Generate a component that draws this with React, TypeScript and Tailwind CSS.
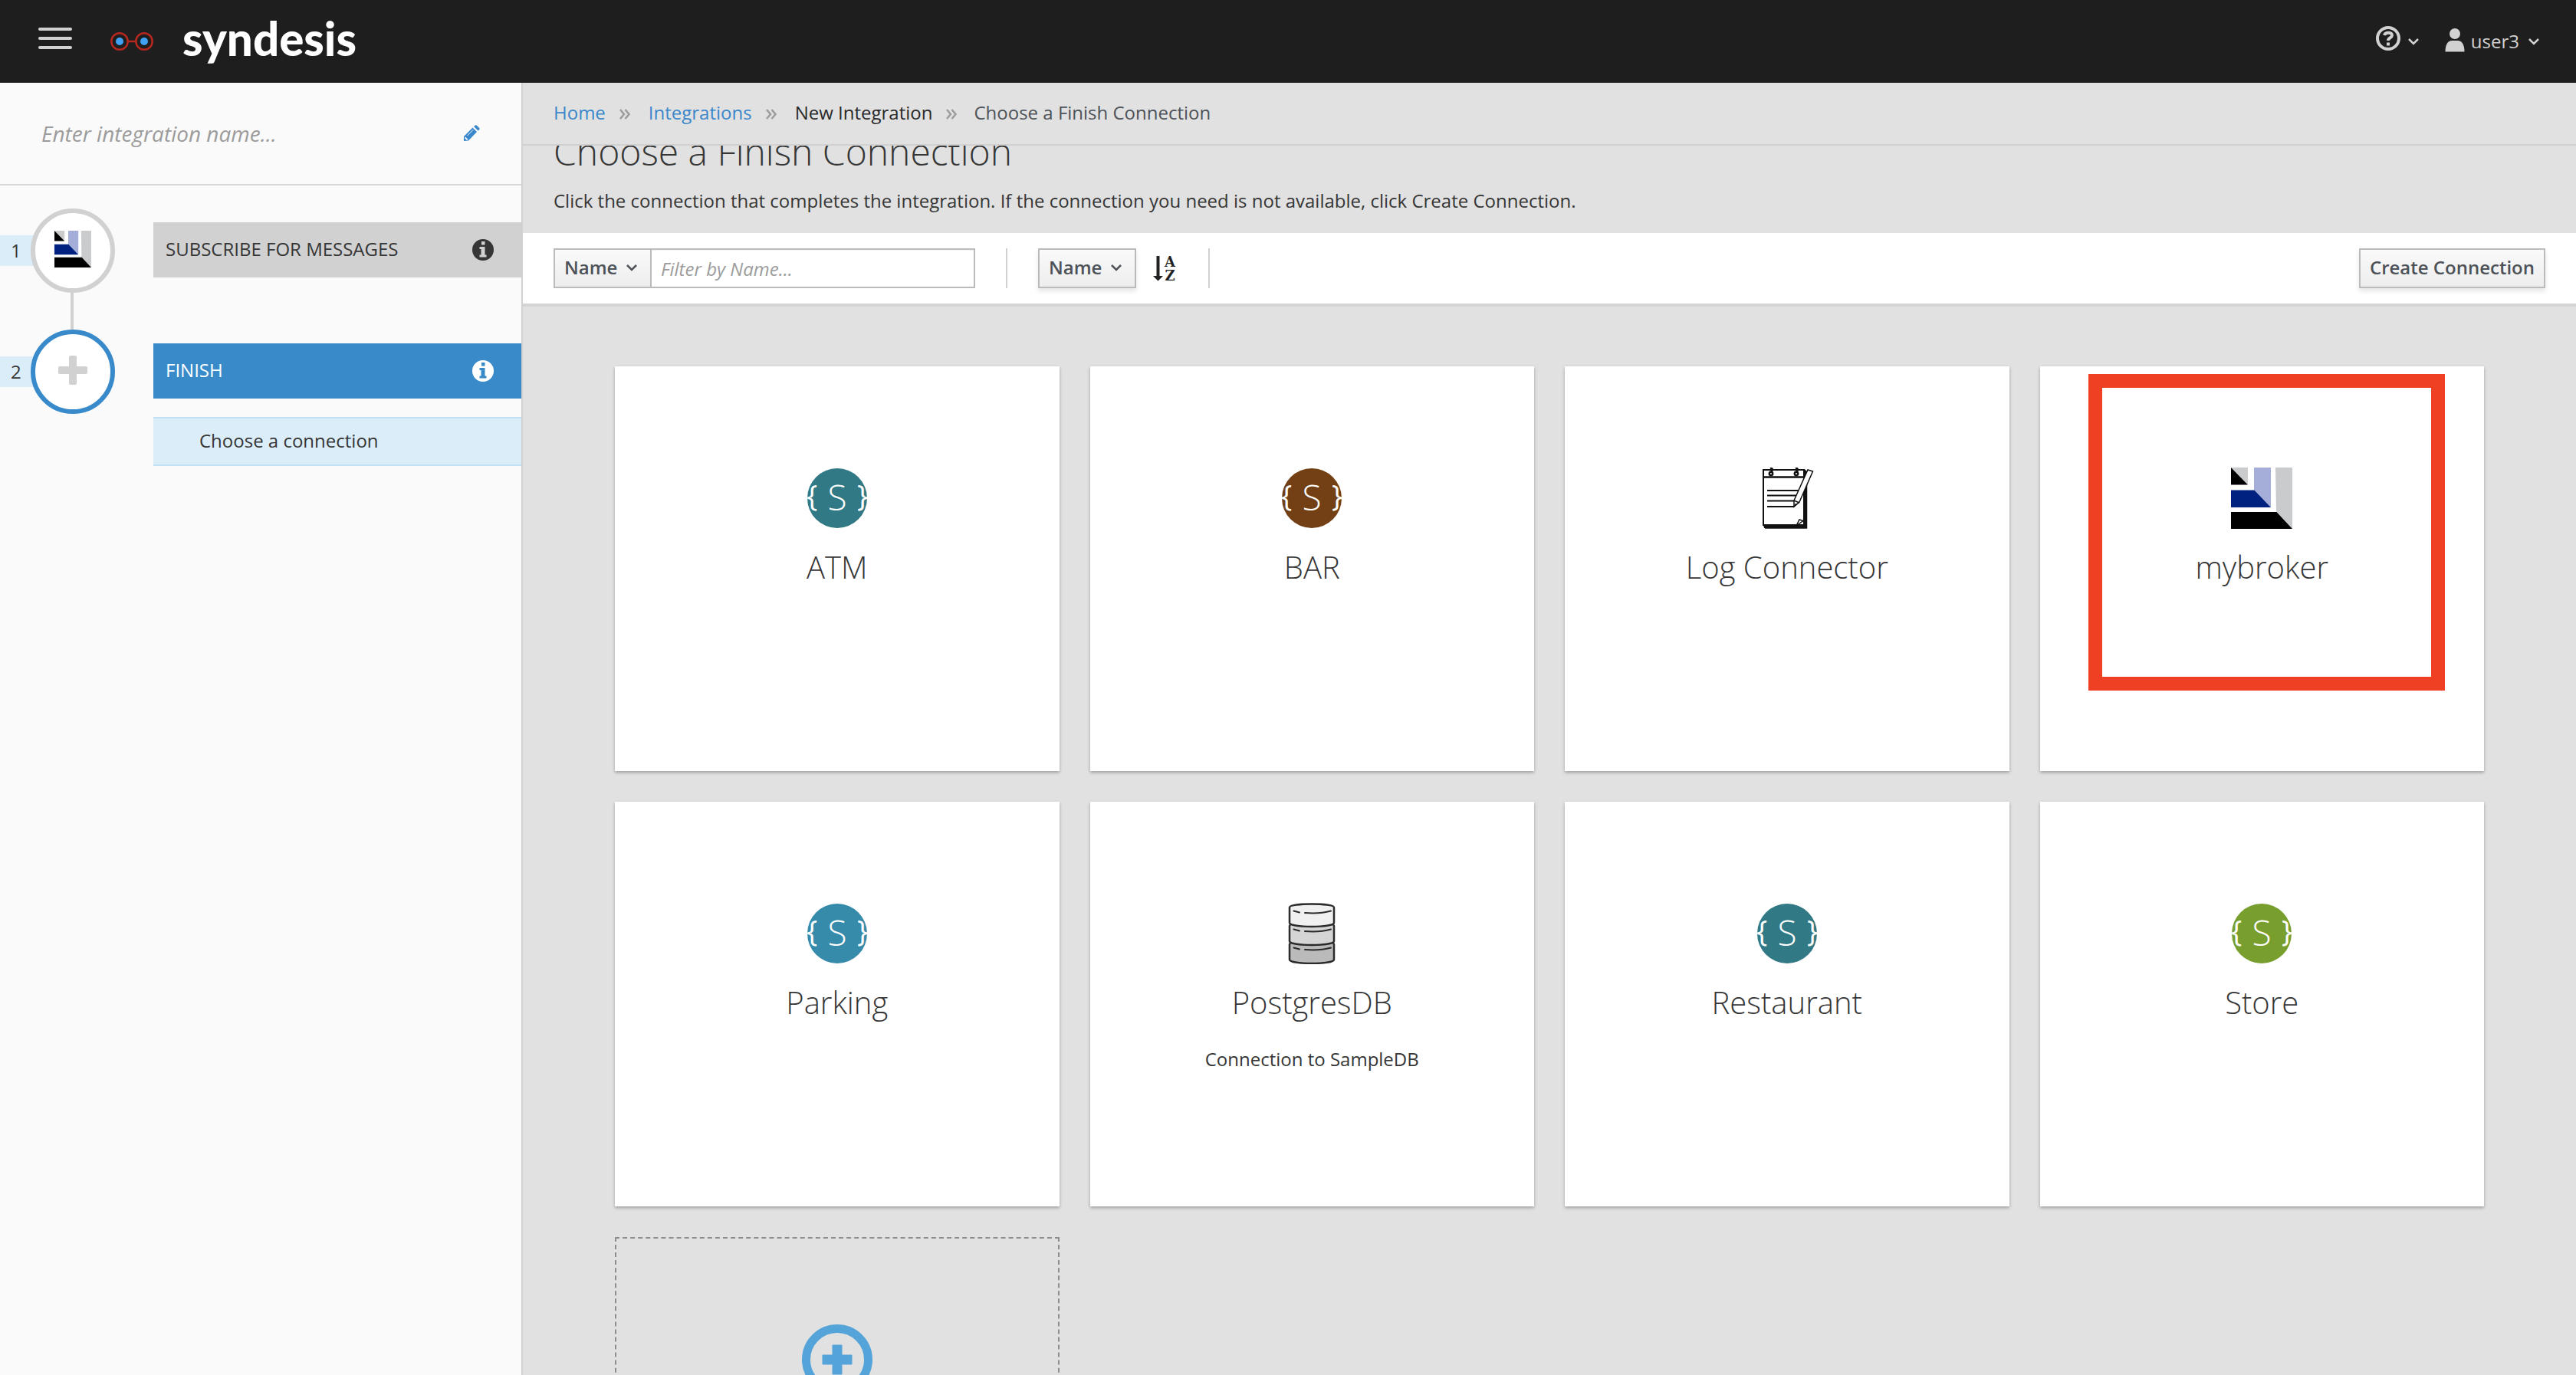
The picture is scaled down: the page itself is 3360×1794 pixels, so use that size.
import React from 'react';

function BrokerIcon({ className }: { className: string }) {
  return (
    <svg viewBox="0 0 80 80" className={className} aria-hidden="true">
      <path d="M0 0L22 22V0Z" fill="#cacbcd" />
      <path d="M0 0L22 22.500H0Z" fill="#000" />
      <path d="M30 0H52V52L30 29Z" fill="#a4aed8" />
      <path d="M0 29.500H30.500L52 52H0Z" fill="#00217f" />
      <path d="M58 0H80V80L59 57Z" fill="#cacbcd" />
      <path d="M0 58H59.500L80 80H0Z" fill="#000" />
    </svg>
  );
}

function ApiIcon({ color }: { color: string }) {
  return (
    <svg viewBox="0 0 80 80" className="size-20 overflow-visible" aria-hidden="true">
      <circle cx="40" cy="40" r="39" fill={color} />
      <g fill="#fff" fontFamily="Open Sans, sans-serif" textAnchor="middle">
        <text x="40" y="56" fontSize="46" fontWeight="300">S</text>
        <text x="7" y="51" fontSize="38">{'{'}</text>
        <text x="73" y="51" fontSize="38">{'}'}</text>
      </g>
    </svg>
  );
}

function LogIcon() {
  return (
    <svg viewBox="0 0 80 80" className="size-20" fill="none" stroke="#111" strokeWidth="2" aria-hidden="true">
      <path d="M9 3H62V75H9Z" />
      <path d="M9 12.500H62M10 76L12 78.500H65V6L62 3M64 4V78" strokeWidth="2.500" />
      <path d="M10 77.500H65" strokeWidth="3" />
      <path d="M14 30H55M14 36.500H52M14 43.500H49M14 51H49" />
      <path d="M52 76L56 68L61 69.500L52 76" strokeWidth="1.500" />
      <g strokeWidth="2.500">
        <path d="M18 1.500C21 0 22 3 19 6" />
        <circle cx="19" cy="8" r="2.200" />
        <path d="M51 1.500C54 0 55 3 52 6" />
        <circle cx="52" cy="8" r="2.200" />
      </g>
      <path d="M49 43L67 3L73.500 5L56 45L49 51Z" fill="#fff" strokeWidth="1.500" />
      <path d="M49 43L56 46M49 51L52 47" strokeWidth="1.500" />
    </svg>
  );
}

function DatabaseIcon() {
  const discs = [
    { y: 48, fill: '#bababa' },
    { y: 24, fill: '#d5d5d5' },
    { y: 0, fill: '#f0f0f0' },
  ];
  return (
    <svg viewBox="0 0 80 80" className="size-20" stroke="#2b2b2b" strokeWidth="2.500" strokeLinecap="round" aria-hidden="true">
      {discs.map((d) => (
        <g key={d.y} transform={`translate(0 ${d.y})`} fill="none">
          <path d="M11 6C11 0 69 0 69 6V26C69 32.500 11 32.500 11 26Z" fill={d.fill} />
          <path d="M16.500 10.500L24 12.500M31 13C44 14 56 13 65 10.500" strokeWidth="2" />
        </g>
      ))}
    </svg>
  );
}

function Chevron() {
  return (
    <svg viewBox="0 0 14 9" className="h-[9px] w-[14px] shrink-0" fill="none" stroke="currentColor" strokeWidth="2.500" aria-hidden="true">
      <path d="M1 1L7 7L13 1" />
    </svg>
  );
}

function InfoIcon() {
  return (
    <svg viewBox="0 0 28 28" className="size-7" aria-hidden="true">
      <path
        fill="currentColor"
        fillRule="evenodd"
        d="M14 0A14 14 0 1 1 14 28A14 14 0 1 1 14 0ZM12 3V7.500H16.500V3ZM9.500 10V13H11.500V20.500H9.500V23.500H18.500V20.500H16.500V10Z"
      />
    </svg>
  );
}

function Breadcrumbs() {
  const sep = (
    <svg viewBox="0 0 14 14" className="mt-1 mr-[22px] ml-[18px] size-[14px]" fill="none" stroke="#9c9c9c" strokeWidth="2.500" aria-hidden="true">
      <path d="M1 1L6 7L1 13M7.500 1L12.500 7L7.500 13" />
    </svg>
  );
  return (
    <nav aria-label="Breadcrumb" className="h-[82px] shrink-0 border-b-2 border-[#d1d1d1] px-10 leading-8">
      <ol className="flex h-[78px] items-center">
        <li><a href="#home" className="text-[#3a87cb]">Home</a></li>
        <li>{sep}</li>
        <li><a href="#integrations" className="ml-[2px] text-[#3a87cb]">Integrations</a></li>
        <li>{sep}</li>
        <li className="ml-[2px] text-[#292929]">New Integration</li>
        <li>{sep}</li>
        <li className="text-[#4d5258]">Choose a Finish Connection</li>
      </ol>
    </nav>
  );
}

const BUTTON =
  'flex h-[52px] items-center border-2 border-[#bbb] bg-linear-to-b from-[#fafafa] to-[#ededed] px-3 pb-[2px] font-semibold text-[#4d5258]';

function Toolbar() {
  return (
    <div className="flex h-24 items-start border-b-4 border-[#d4d4d4] bg-white px-10 pt-5">
      <button className={BUTTON + ' w-32 gap-3'}>
        Name <Chevron />
      </button>
      <input
        type="text"
        aria-label="Filter by Name"
        placeholder="Filter by Name..."
        className="-ml-[2px] h-[52px] w-[424px] border-2 border-[#bbb] bg-white px-3 inset-shadow-xs placeholder:text-[#9c9c9c] placeholder:italic"
      />
      <div className="ml-10 h-[52px] w-[2px] bg-[#d1d1d1]" />
      <button className={BUTTON + ' ml-10 w-32 gap-3 shadow-[0_4px_6px_rgba(3,3,3,0.1)]'}>
        Name <Chevron />
      </button>
      <button aria-label="Sort ascending" className="ml-[22px] flex h-[52px] items-center">
        <svg viewBox="0 0 32 36" className="h-9 w-8 overflow-visible" fill="#222" aria-hidden="true">
          <path d="M4.500 2H8.500V28H13L6.500 34.500L0 28H4.500Z" />
          <g fontFamily="DejaVu Serif, serif" fontWeight="700" fontSize="18" textAnchor="middle">
            <text x="22" y="16">A</text>
            <text x="22" y="34">Z</text>
          </g>
        </svg>
      </button>
      <div className="ml-10 h-[52px] w-[2px] bg-[#d1d1d1]" />
      <button className={BUTTON + ' ml-auto shadow-[0_4px_6px_rgba(3,3,3,0.1)]'}>Create Connection</button>
    </div>
  );
}

type Connection = { name: string; icon: React.ReactNode; description?: string; marked?: boolean };

const CONNECTIONS: Connection[] = [
  { name: 'ATM', icon: <ApiIcon color="#317984" /> },
  { name: 'BAR', icon: <ApiIcon color="#724014" /> },
  { name: 'Log Connector', icon: <LogIcon /> },
  { name: 'mybroker', icon: <BrokerIcon className="size-20" />, marked: true },
  { name: 'Parking', icon: <ApiIcon color="#368bab" /> },
  { name: 'PostgresDB', icon: <DatabaseIcon />, description: 'Connection to SampleDB' },
  { name: 'Restaurant', icon: <ApiIcon color="#317984" /> },
  { name: 'Store', icon: <ApiIcon color="#789f2e" /> },
];

function Card({ name, icon, description, marked }: Connection) {
  return (
    <article className="relative flex h-[528px] flex-col items-center bg-white pt-[132px] text-center shadow-[0_2px_4px_rgba(3,3,3,0.3)]">
      {icon}
      <h2 className="mt-[22px] text-[40px] leading-[56px] font-light">{name}</h2>
      {description && <p className="mt-7 leading-9">{description}</p>}
      {marked && <div className="absolute top-[10px] right-[51px] h-[413px] w-[465px] border-18 border-[#ef4023]" />}
    </article>
  );
}

function Step({ index, title, active, children }: { index: number; title: string; active?: boolean; children: React.ReactNode }) {
  return (
    <li className="flex h-[110px] items-center">
      <span className="h-10 w-12 bg-[#dbedf8] pl-[14px] leading-10">{index}</span>
      <span
        className={
          'z-10 -ml-2 flex size-[110px] shrink-0 items-center justify-center rounded-full border-6 bg-white ' +
          (active ? 'border-[#388aca]' : 'border-[#d1d1d1]')
        }
      >
        {children}
      </span>
      <button
        className={
          'mb-[2px] ml-[50px] flex h-[72px] grow items-center justify-between pr-9 pl-4 uppercase ' +
          (active ? 'bg-[#398ac8] text-white' : 'bg-[#d1d1d1]')
        }
      >
        <span className="pb-[2px]">{title}</span>
        <InfoIcon />
      </button>
    </li>
  );
}

export default function App() {
  return (
    <div className="flex h-screen flex-col overflow-hidden bg-[#e1e1e1] font-['Open_Sans',sans-serif] text-[24px] text-[#363636]">
      <header className="flex h-[108px] shrink-0 items-center bg-[#1e1e1e] pr-12 pl-[50px] text-[#d1d1d1]">
        <button aria-label="Toggle navigation" className="mb-2 flex w-11 flex-col gap-2">
          <span className="h-1 rounded-xs bg-[#d1d1d1]" />
          <span className="h-1 rounded-xs bg-[#d1d1d1]" />
          <span className="h-1 rounded-xs bg-[#d1d1d1]" />
        </button>
        <a href="#home" className="ml-[50px] flex items-center">
          <svg viewBox="0 0 56 24" className="h-6 w-14" fill="none" stroke="#b5281f" strokeWidth="2.500" aria-hidden="true">
            <circle cx="12" cy="12" r="10.700" />
            <circle cx="44" cy="12" r="10.700" />
            <path d="M23 12H33" />
            <circle cx="12" cy="12" r="5" fill="#41a1f4" stroke="none" />
            <circle cx="44" cy="12" r="5" fill="#41a1f4" stroke="none" />
          </svg>
          <span className="mb-2 ml-[38px] font-[Lato,sans-serif] text-[60px] leading-[80px] font-black text-white">syndesis</span>
        </a>
        <button aria-label="Help" className="ml-auto flex items-center gap-[10px]">
          <svg viewBox="0 0 32 32" className="mb-2 size-8" fill="none" stroke="currentColor" aria-hidden="true">
            <circle cx="16" cy="16" r="14" strokeWidth="4" />
            <path d="M11 12C12 7.500 21 7.500 21 12C21 15.500 16 15 16 19" strokeWidth="4" />
            <path d="M14 21.500H18V25.500H14Z" fill="currentColor" stroke="none" />
          </svg>
          <Chevron />
        </button>
        <button className="ml-[34px] flex items-center">
          <svg viewBox="0 0 26 31" className="mb-1 h-[31px] w-[26px]" fill="currentColor" aria-hidden="true">
            <circle cx="13" cy="7" r="7" />
            <path d="M0.500 30.500C0.500 21 4 16 9 16H17C22 16 25.500 21 25.500 30.500Z" />
          </svg>
          <span className="mr-3 ml-2">user3</span>
          <Chevron />
        </button>
      </header>

      <div className="flex min-h-0 grow">
        <aside className="w-[682px] shrink-0 border-r-2 border-[#d1d1d1] bg-[#fafafa]">
          <div className="flex h-[134px] items-center border-b-2 border-[#d8d8d8] px-[54px]">
            <input
              type="text"
              aria-label="Integration name"
              placeholder="Enter integration name..."
              className="h-12 min-w-0 grow text-[28px] placeholder:text-[#9c9c9c] placeholder:italic"
            />
            <button aria-label="Edit name">
              <svg viewBox="0 0 22 22" className="size-[22px]" aria-hidden="true">
                <path d="M1 21V15L12.500 3.500L18 9L7 20.500ZM14 2L16 0.500Q17 -0.200 18 0.700L21.200 4Q22 5 21.200 6L19.500 7.500Z" fill="#3a87cb" />
                <path d="M3 15.500L6.500 19L5 20L2 17Z" fill="#fafafa" />
                <path d="M5.500 14L13 6.500" stroke="#fafafa" strokeWidth="1" />
              </svg>
            </button>
          </div>
          <ol className="pt-[30px]">
            <Step index={1} title="Subscribe for messages">
              <BrokerIcon className="mb-1 size-12" />
            </Step>
            <li aria-hidden="true" className="ml-[92px] h-12 w-1 bg-[#d1d1d1]" />
            <Step index={2} title="Finish" active>
              <svg viewBox="0 0 38 38" className="mb-1 size-[38px]" fill="#d1d1d1" aria-hidden="true">
                <rect x="14" width="10" height="38" rx="2" />
                <rect y="14" width="38" height="10" rx="2" />
              </svg>
            </Step>
          </ol>
          <div className="mt-1 ml-[200px] h-16 border-y-2 border-[#bfe0f2] bg-[#dbedf8] pl-[60px] leading-[58px]">
            Choose a connection
          </div>
        </aside>

        <div className="flex min-w-0 grow flex-col">
          <Breadcrumbs />
          <main className="min-h-0 grow overflow-hidden">
            <div className="-mt-[26px] h-[140px] px-10">
              <h1 className="text-[48px] leading-[68px] font-light">Choose a Finish Connection</h1>
              <p className="mt-3 leading-9">
                Click the connection that completes the integration. If the connection you need is not available, click Create
                Connection.
              </p>
            </div>
            <Toolbar />
            <div className="grid grid-cols-4 gap-10 px-[120px] pt-[78px]">
              {CONNECTIONS.map((c) => (
                <Card key={c.name} {...c} />
              ))}
              <button
                aria-label="Create Connection"
                className="flex h-[528px] items-start justify-center border-2 border-dashed border-[#8b8d8f] pt-28"
              >
                <svg viewBox="0 0 92 92" className="size-[92px]" fill="#54a4d9" aria-hidden="true">
                  <circle cx="46" cy="46" r="40.500" fill="none" stroke="#54a4d9" strokeWidth="11" />
                  <rect x="39.500" y="26.500" width="13" height="39" rx="1" />
                  <rect x="26.500" y="39.500" width="39" height="13" rx="1" />
                </svg>
              </button>
            </div>
          </main>
        </div>
      </div>
    </div>
  );
}
